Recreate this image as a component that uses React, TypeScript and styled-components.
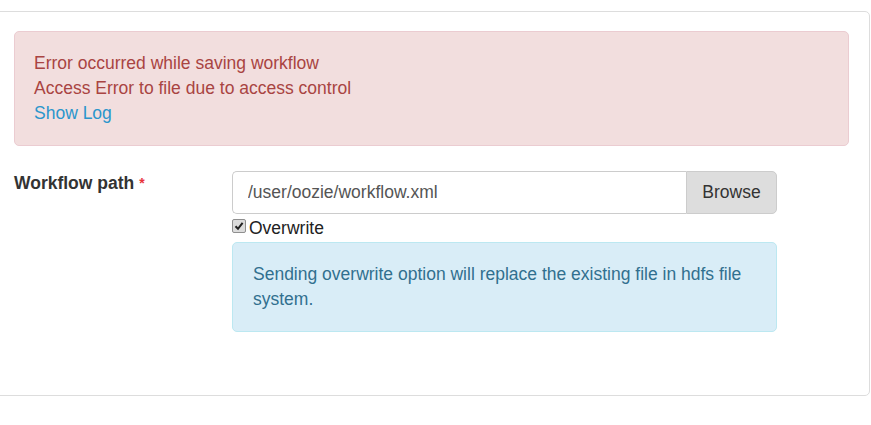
import React from 'react';
import styled, { createGlobalStyle } from 'styled-components';

const GlobalStyle = createGlobalStyle`
	body {
		margin: 0;
		background: #fff;
		font-family: 'Liberation Sans', Arial, sans-serif;
		font-size: 17.5px;
		line-height: 25px;
		color: #333;
	}
`;

const Panel = styled.div`
	box-sizing: border-box;
	margin: 11px 0 0 -5px;
	width: 875px;
	height: 385px;
	padding: 19px 20px 0 18px;
	border: 1px solid #ddd;
	border-radius: 5px;
	background: #fff;
`;

const Alert = styled.div<{ variant: 'danger' | 'info' }>`
	box-sizing: border-box;
	padding: 19px;
	border: 1px solid ${(props) => (props.variant === 'danger' ? '#ebccd1' : '#bce8f1')};
	border-radius: 5px;
	background: ${(props) => (props.variant === 'danger' ? '#f2dede' : '#d9edf7')};
	color: ${(props) => (props.variant === 'danger' ? '#a94442' : '#31708f')};
`;

const ErrorAlert = styled(Alert)`
	margin-bottom: 25px;
`;

const InfoAlert = styled(Alert)`
	width: 545px;
	padding-left: 20px;
`;

const LogLink = styled.a`
	color: #2b96cc;
	text-decoration: none;
	cursor: pointer;
`;

const FormRow = styled.div`
	display: flex;
	align-items: flex-start;
`;

const Label = styled.label`
	width: 218px;
	font-weight: bold;
	color: #333;
`;

const Required = styled.span`
	margin-left: 5px;
	color: #e8353b;
	font-size: 14px;
	vertical-align: top;
`;

const Controls = styled.div`
	display: flex;
	flex-direction: column;
`;

const InputGroup = styled.div`
	display: flex;
	width: 545px;
	height: 43px;
`;

const PathInput = styled.input`
	box-sizing: border-box;
	flex: 1;
	height: 43px;
	padding: 0 15px;
	border: 1px solid #ccc;
	border-right: none;
	border-radius: 5px 0 0 5px;
	font-family: inherit;
	font-size: 17.5px;
	color: #555;
	outline: none;
`;

const BrowseButton = styled.button`
	box-sizing: border-box;
	width: 91px;
	height: 43px;
	border: 1px solid #ccc;
	border-radius: 0 5px 5px 0;
	background: #ddd;
	font-family: inherit;
	font-size: 17.5px;
	color: #333;
`;

const CheckRow = styled.label`
	display: flex;
	align-items: center;
	height: 28px;
	color: #222;
`;

const CheckBox = styled.span`
	box-sizing: border-box;
	display: inline-flex;
	align-items: center;
	justify-content: center;
	width: 14px;
	height: 14px;
	margin: -4px 3px 0 0;
	border: 1px solid #8f8f8f;
	border-radius: 2px;
	background: #dcdcdc;
`;

export default function App() {
	return (
		<>
			<GlobalStyle />
			<Panel>
				<ErrorAlert variant="danger">
					<div>Error occurred while saving workflow</div>
					<div>Access Error to file due to access control</div>
					<LogLink>Show Log</LogLink>
				</ErrorAlert>
				<FormRow>
					<Label>
						Workflow path<Required>*</Required>
					</Label>
					<Controls>
						<InputGroup>
							<PathInput defaultValue="/user/oozie/workflow.xml" />
							<BrowseButton>Browse</BrowseButton>
						</InputGroup>
						<CheckRow>
							<CheckBox>
								<svg width="10" height="10" viewBox="0 0 10 10">
									<path d="M1.5 5.2 L4 7.8 L8.6 1.8" fill="none" stroke="#222" strokeWidth="2" />
								</svg>
							</CheckBox>
							Overwrite
						</CheckRow>
						<InfoAlert variant="info">
							Sending overwrite option will replace the existing file in hdfs file system.
						</InfoAlert>
					</Controls>
				</FormRow>
			</Panel>
		</>
	);
}
